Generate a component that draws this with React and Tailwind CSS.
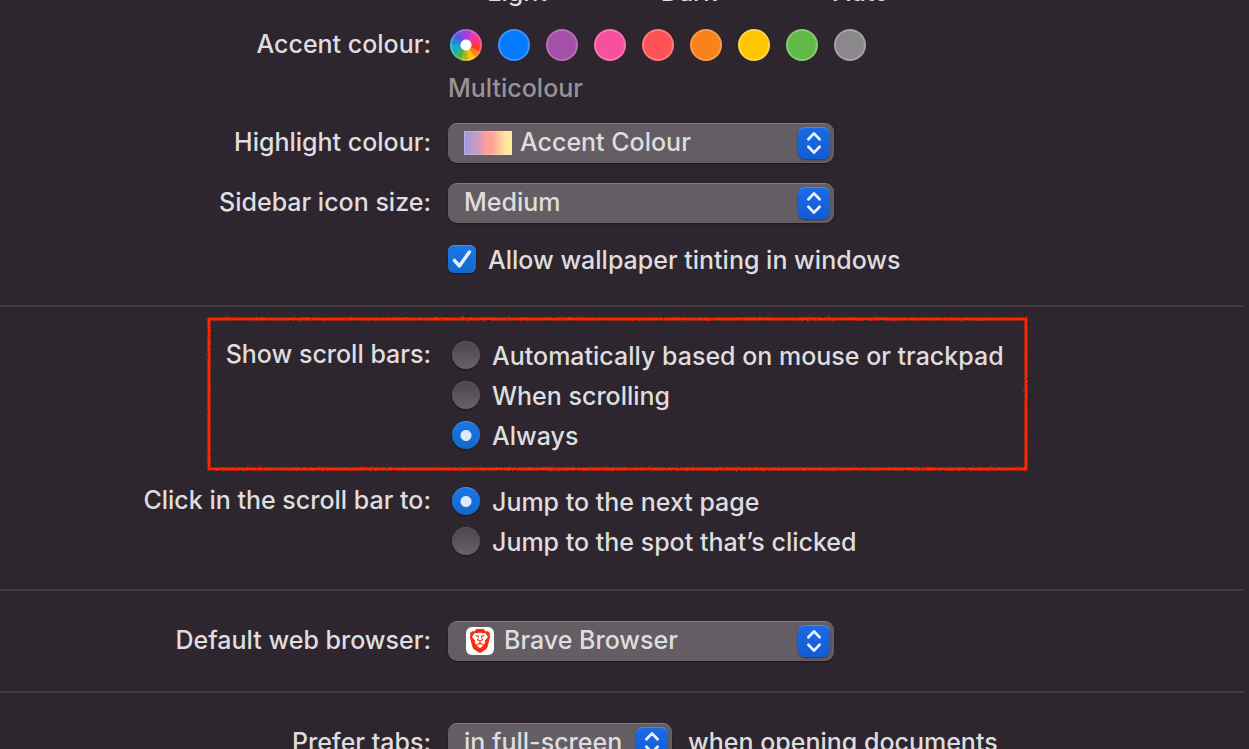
import { SiBrave } from "react-icons/si";

const ACCENTS = [
  {
    name: "Multicolour",
    style:
      "border-white/20 bg-[radial-gradient(circle,#ffffff_5px,transparent_6px),conic-gradient(from_-15deg,#a03fd8_0deg_30deg,#e838b0_40deg_60deg,#f7358a_65deg_95deg,#ff3b30_100deg_128deg,#fb7f1e_132deg_155deg,#ffc400_160deg_185deg,#a3b820_190deg_212deg,#4db04a_216deg_240deg,#12b0b8_246deg_285deg,#2b7fe0_292deg_315deg,#5a55e0_322deg_342deg,#8a48e0_350deg_360deg)] bg-origin-border",
  },
  { name: "Blue", style: "border-[#3b93f9] bg-[#057aff]" },
  { name: "Purple", style: "border-[#b86fba] bg-[#a550a7]" },
  { name: "Pink", style: "border-[#fa76b2] bg-[#f84f9e]" },
  { name: "Red", style: "border-[#ff7a7b] bg-[#ff5257]" },
  { name: "Orange", style: "border-[#fa9d4b] bg-[#f9821b]" },
  { name: "Yellow", style: "border-[#ffd649] bg-[#ffc600]" },
  { name: "Green", style: "border-[#86cb73] bg-[#62ba46]" },
  { name: "Graphite", style: "border-[#a5a2a5] bg-[#8b888b]" },
];

const ROW = "grid grid-cols-[431px_minmax(0,1fr)] gap-x-[17px]";

function Label({ htmlFor, id, children }) {
  const Tag = htmlFor ? "label" : "span";
  return (
    <Tag htmlFor={htmlFor} id={id} className="text-right whitespace-nowrap">
      {children}
    </Tag>
  );
}

function PopUp({ id, options, width, padding = "pl-4", icon }) {
  return (
    <div className={`relative h-10 ${width}`}>
      <select
        id={id}
        className={`h-10 w-full appearance-none rounded-[9px] border-t border-[#817b80] bg-[#645d63] pr-10 pb-1 leading-8 shadow-[0_1px_2px_rgba(0,0,0,0.4)] outline-none ${padding}`}
      >
        {options.map((option) => (
          <option key={option}>{option}</option>
        ))}
      </select>
      {icon}
      <span className="pointer-events-none absolute top-1 right-1 size-8 rounded-[7px] bg-linear-to-b from-[#1a6be8] to-[#125bd2] shadow-[inset_0_1px_0_#4c87ea,0_1px_2px_rgba(0,0,0,0.45)]">
        <svg
          viewBox="0 0 32 32"
          className="size-8"
          fill="none"
          stroke="#e9effc"
          strokeWidth="2.8"
          strokeLinecap="round"
          strokeLinejoin="round"
          aria-hidden="true"
        >
          <path d="M10.4 12.2 16 6.4l5.6 5.8M10.4 19.8l5.6 5.8 5.6-5.8" />
        </svg>
      </span>
    </div>
  );
}

function RadioList({ name, labelledBy, options, selected }) {
  return (
    <div role="radiogroup" aria-labelledby={labelledBy} className="flex flex-col gap-2 pt-0.5 pl-1">
      {options.map((option) => (
        <label key={option} className="flex items-center gap-3 whitespace-nowrap">
          <input
            type="radio"
            name={name}
            defaultChecked={option === selected}
            className="mb-0.5 size-7 shrink-0 appearance-none rounded-full border-t border-[#5d565c] bg-[linear-gradient(#4d464c,#68616a)] shadow-[0_1px_2px_rgba(0,0,0,0.4)] checked:border-[#4a90e8] checked:bg-[radial-gradient(circle,#dfe9fa_5px,transparent_6px),linear-gradient(#1a77e4,#1468cb)]"
          />
          {option}
        </label>
      ))}
    </div>
  );
}

function Divider() {
  return <hr className="mr-[5px] border-t-2 border-[#423b42]" />;
}

function Highlight() {
  return (
    <svg
      className="pointer-events-none absolute inset-y-0 left-[207px] h-full w-[821px] overflow-visible"
      aria-hidden="true"
    >
      <filter id="rough" x="-2%" y="-5%" width="104%" height="110%">
        <feTurbulence type="fractalNoise" baseFrequency="0.7" numOctaves="2" seed="4" result="noise" />
        <feDisplacementMap in="SourceGraphic" in2="noise" scale="2.4" xChannelSelector="R" yChannelSelector="G" />
      </filter>
      <svg x="2" y="2" width="817" height="150" overflow="visible">
        <rect width="100%" height="100%" fill="none" stroke="#ff2600" strokeWidth="3" filter="url(#rough)" />
      </svg>
    </svg>
  );
}

export default function App() {
  return (
    <main className="h-screen overflow-hidden bg-[#2e262e] font-['Inter','Liberation_Sans',sans-serif] text-[25px] leading-8 font-medium text-[#dfdddf]">
      <section className="-mt-6 pb-[29px]">
        <div className={ROW}>
          <div className="col-start-2 flex gap-[34px] text-center">
            <span className="w-[138px]">Light</span>
            <span className="w-[138px]">Dark</span>
            <span className="w-[138px]">Auto</span>
          </div>
        </div>

        <div className={`${ROW} mt-5`}>
          <Label id="accent">Accent colour:</Label>
          <div>
            <div role="radiogroup" aria-labelledby="accent" className="flex gap-4 pt-px pl-0.5">
              {ACCENTS.map(({ name, style }, i) => (
                <input
                  key={name}
                  type="radio"
                  name="accent"
                  aria-label={name}
                  defaultChecked={i === 0}
                  className={`size-8 appearance-none rounded-full border-2 ${style}`}
                />
              ))}
            </div>
            <p className="mt-[11px] text-[#989397]">Multicolour</p>
          </div>
        </div>

        <div className={`${ROW} mt-[19px]`}>
          <div className="grid pt-[3px]">
            <Label htmlFor="highlight">Highlight colour:</Label>
          </div>
          <PopUp
            id="highlight"
            options={["Accent Colour"]}
            width="w-[386px]"
            padding="pl-[72px]"
            icon={
              <span className="pointer-events-none absolute top-2 left-4 h-6 w-12 border border-white/20 bg-[linear-gradient(90deg,#a99bdb_8%,#c99bbd_28%,#ff9d9b_46%,#ffa59a_60%,#ffe69b_86%)] bg-origin-border" />
            }
          />
        </div>

        <div className={`${ROW} mt-5`}>
          <div className="grid pt-[3px]">
            <Label htmlFor="sidebar">Sidebar icon size:</Label>
          </div>
          <PopUp id="sidebar" options={["Medium", "Small", "Large"]} width="w-[386px]" />
        </div>

        <div className={`${ROW} mt-[21px]`}>
          <label className="col-start-2 flex items-center gap-3 whitespace-nowrap">
            <span className="relative mb-0.5 flex size-7 shrink-0">
              <input
                type="checkbox"
                defaultChecked
                className="peer size-7 appearance-none rounded-md border-t border-[#4a90e8] bg-linear-to-b from-[#1a78e5] to-[#1468cb] shadow-[0_1px_2px_rgba(0,0,0,0.4)]"
              />
              <svg
                viewBox="0 0 28 28"
                className="pointer-events-none absolute inset-0 hidden size-7 peer-checked:block"
                fill="none"
                stroke="#e6eefb"
                strokeWidth="3.4"
                strokeLinecap="round"
                strokeLinejoin="round"
                aria-hidden="true"
              >
                <path d="M6.4 15.4 11.4 21 21.4 7" />
              </svg>
            </span>
            Allow wallpaper tinting in windows
          </label>
        </div>
      </section>

      <Divider />

      <section className="pt-2.5 pb-[31px]">
        <div className="relative pt-[21px] pb-[17px]">
          <Highlight />
          <div className={ROW}>
            <Label id="scrollbars">Show scroll bars:</Label>
            <RadioList
              name="scrollbars"
              labelledBy="scrollbars"
              options={["Automatically based on mouse or trackpad", "When scrolling", "Always"]}
              selected="Always"
            />
          </div>
        </div>
        <div className={`${ROW} mt-[15px]`}>
          <Label id="scrollclick">Click in the scroll bar to:</Label>
          <RadioList
            name="scrollclick"
            labelledBy="scrollclick"
            options={["Jump to the next page", "Jump to the spot that’s clicked"]}
            selected="Jump to the next page"
          />
        </div>
      </section>

      <Divider />

      <section className="py-[30px]">
        <div className={ROW}>
          <div className="grid pt-[3px]">
            <Label htmlFor="browser">Default web browser:</Label>
          </div>
          <PopUp
            id="browser"
            options={["Brave Browser"]}
            width="w-[386px]"
            padding="pl-14"
            icon={
              <span className="pointer-events-none absolute top-1.5 left-[18px] flex size-7 items-center justify-center rounded-md bg-white text-[#fb2b0d]">
                <SiBrave className="size-6" />
              </span>
            }
          />
        </div>
      </section>

      <Divider />

      <section className="pt-[30px]">
        <div className={ROW}>
          <div className="grid pt-[3px]">
            <Label htmlFor="tabs">Prefer tabs:</Label>
          </div>
          <div className="flex items-start gap-4">
            <PopUp id="tabs" options={["in full-screen", "always", "never"]} width="w-[224px]" />
            <span className="pt-[3px] whitespace-nowrap">when opening documents</span>
          </div>
        </div>
      </section>
    </main>
  );
}
